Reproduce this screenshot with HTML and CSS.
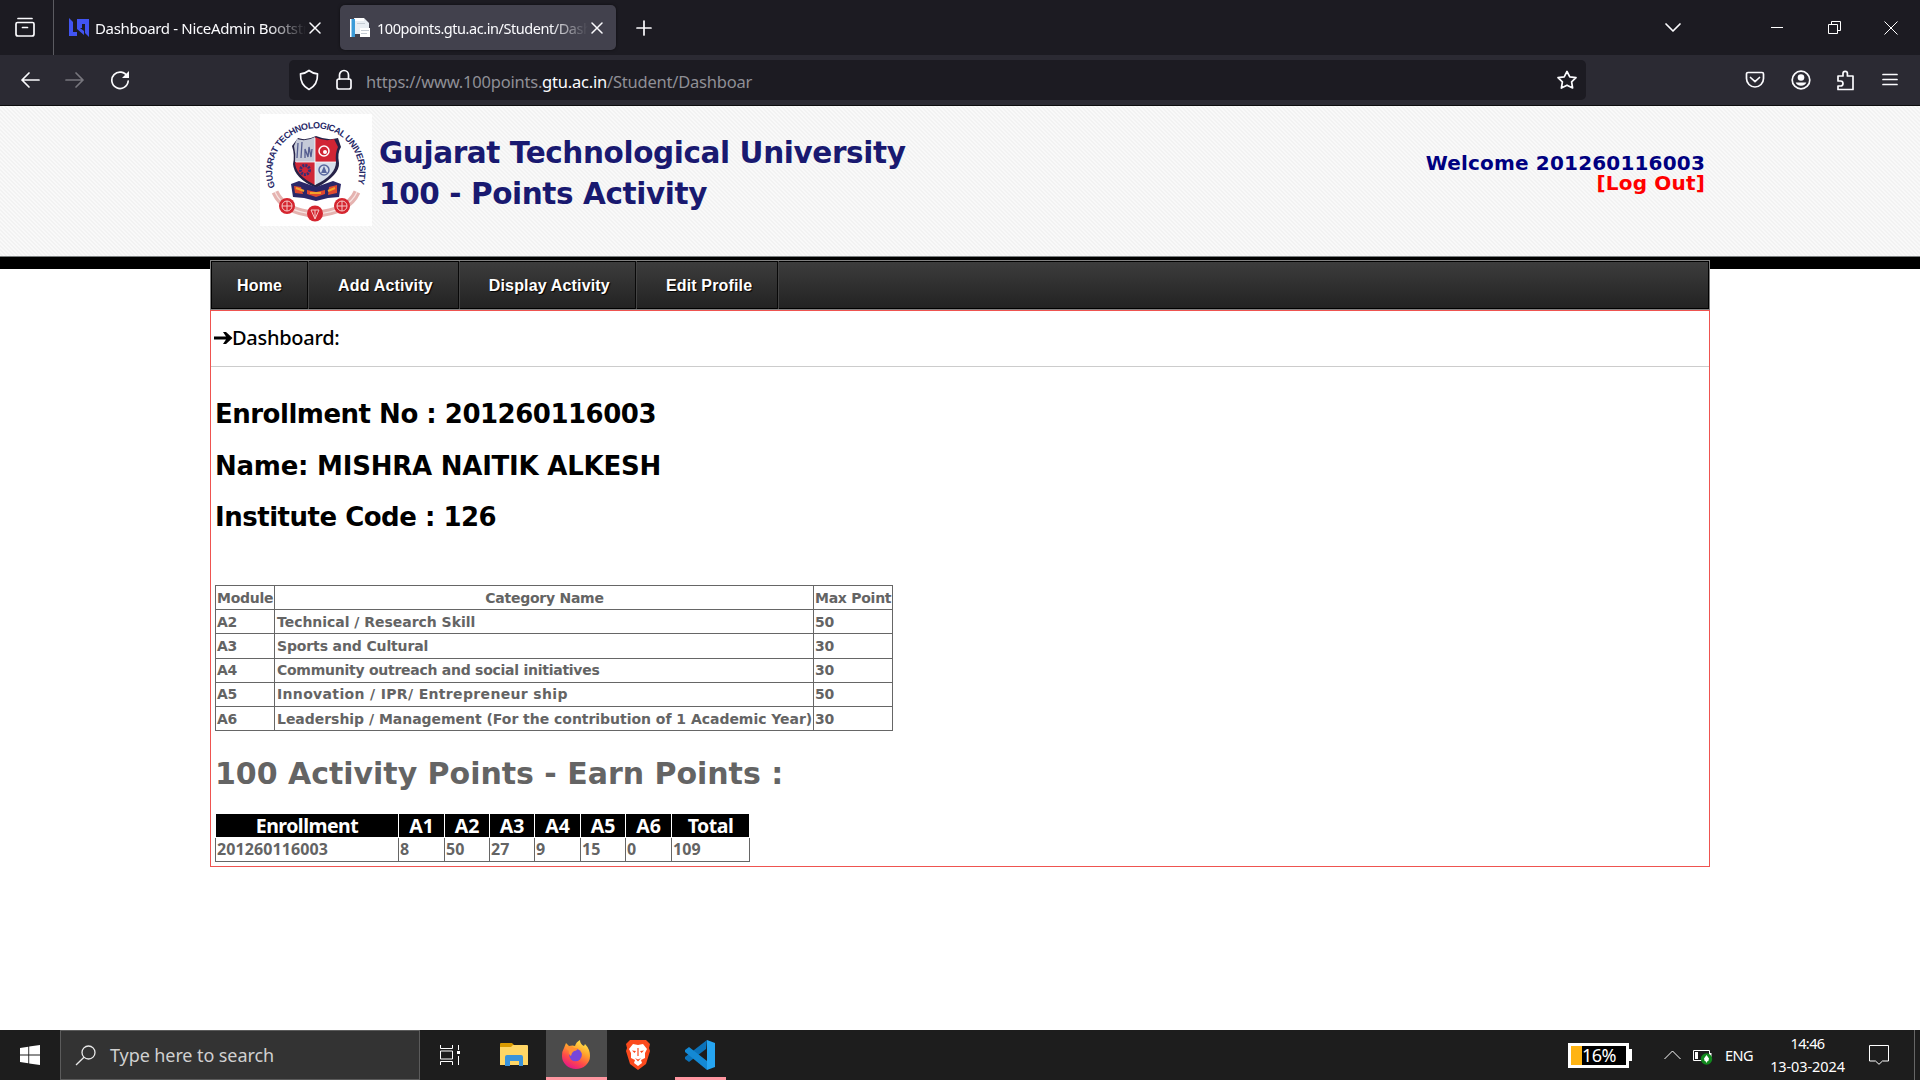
FILE: index.html
```html
<!DOCTYPE html>
<html lang="en">
<head>
<meta charset="utf-8">
<title>100 Points Activity - Dashboard</title>
<link rel="stylesheet" href="styles.css">
</head>
<body>
<div class="tabbar">
  <div class="recent"><svg width="22" height="22" viewBox="0 0 22 22" class="ln"><path d="M4 2.5h14M3.5 6.500h15a1.500 1.500 0 0 1 1.500 1.500v10a2 2 0 0 1-2 2H4a2 2 0 0 1-2-2V8a1.500 1.500 0 0 1 1.500-1.500zM8.500 11.500h5"/></svg></div>
  <div class="tab">
    <svg width="20" height="20" viewBox="0 0 20 20"><path fill="#4154f1" d="M0 0l4 4v10h4v4H0zM8 1h12v18l-4-4V6h-3v4h-2l4 3v4l-7-6z"/></svg>
    <span class="tab-title">Dashboard - NiceAdmin Bootstrap</span>
    <svg class="x ln" width="12" height="12" viewBox="0 0 12 12"><path d="M1 1l10 10M11 1L1 11"/></svg>
  </div>
  <div class="tab active">
    <svg width="20" height="20" viewBox="0 0 20 20"><path fill="#e9eef3" d="M4 0h10l5 5v11H4z"/><path fill="#3b9bd8" d="M1 1h4v18H1z"/><path fill="#fff" d="M0 1h1.500v18H0zM5 0h9v3H5zM10 10h10v9H10z"/><path fill="#c5ccd4" d="M11 12h8v1h-8zM11 15h6v1h-6zM7 5h8v1H7z"/></svg>
    <span class="tab-title tight">100points.gtu.ac.in/Student/Dashboard</span>
    <svg class="x ln" width="12" height="12" viewBox="0 0 12 12"><path d="M1 1l10 10M11 1L1 11"/></svg>
  </div>
  <svg class="plus ln" width="16" height="16" viewBox="0 0 16 16"><path d="M8 1v14M1 8h14"/></svg>
  <div class="wincontrols">
    <svg class="ln chev" width="18" height="12" viewBox="0 0 18 12"><path d="M2 2l7 7 7-7"/></svg>
    <svg class="thin min" width="12" height="14" viewBox="0 0 12 14"><path d="M0 6.500h12"/></svg>
    <svg class="thin res" width="13" height="13" viewBox="0 0 13 13"><path d="M.5 3.500h9v9h-9zM3.500 3.500v-3h9v9h-3"/></svg>
    <svg class="thin" width="14" height="14" viewBox="0 0 14 14"><path d="M.5.5l13 13M13.500.5l-13 13"/></svg>
  </div>
</div>
<div class="toolbar">
  <div class="navbtns">
    <svg class="ln" width="20" height="18" viewBox="0 0 20 18"><path d="M19 9H2M9 2L2 9l7 7"/></svg>
    <svg class="ln dim" width="20" height="18" viewBox="0 0 20 18"><path d="M1 9h17M11 2l7 7-7 7"/></svg>
    <svg class="ln" width="20" height="20" viewBox="0 0 20 20"><path d="M17.300 6.500A8.200 8.200 0 1 0 18.200 11"/><path fill="#fbfbfe" stroke="none" d="M19 1v7h-7z"/></svg>
  </div>
  <div class="urlbar">
    <svg class="ln" width="20" height="22" viewBox="0 0 20 22"><path d="M10 1.500C7 4 4 4.600 1.500 4.800 1.200 12 4 17.500 10 20.500 16 17.500 18.800 12 18.500 4.800 16 4.600 13 4 10 1.500z"/></svg>
    <svg class="ln lock" width="18" height="22" viewBox="0 0 18 22"><rect x="2" y="10" width="14" height="10" rx="2"/><path d="M4.500 10V6a4.500 4.500 0 0 1 9 0v4"/></svg>
    <span class="url">https://www.100points.<b>gtu.ac.in</b>/Student/Dashboar</span>
    <svg class="ln star" width="22" height="20" viewBox="0 0 22 20"><path d="M11 1.500l2.800 5.300 6.200.9-4.400 4.200 1 6.100-5.600-2.800L5.400 18l1-6.100L2 7.700l6.200-.9z"/></svg>
  </div>
  <div class="actions">
    <svg class="ln" width="20" height="18" viewBox="0 0 20 18"><path d="M3 1.500h14a1.500 1.500 0 0 1 1.500 1.500v4.500a8.500 8.500 0 0 1-17 0V3A1.500 1.500 0 0 1 3 1.500zM5.500 6.500L10 10.700l4.500-4.200"/></svg>
    <svg class="ln" width="20" height="20" viewBox="0 0 20 20"><circle cx="10" cy="10" r="8.800"/><circle cx="10" cy="7.500" r="3.300" fill="#fbfbfe" stroke="none"/><path fill="#fbfbfe" stroke="none" d="M4.700 12.500h10.600c-.5 2-2.500 3.200-5.300 3.200s-4.800-1.200-5.300-3.200z"/></svg>
    <svg class="ln" width="20" height="21" viewBox="0 0 20 21"><path d="M2 9V6h5V3.500a2.200 2.200 0 0 1 4.400 0V6H17v13.500H2V16h2.500a2 2 0 0 0 0-5H2z"/></svg>
    <svg class="ln" width="16" height="14" viewBox="0 0 16 14"><path d="M1 1.500h14M1 6.500h14M1 11.500h14"/></svg>
  </div>
</div>
<header class="masthead">
  <svg class="crest" width="112" height="112" viewBox="0 0 112 112">
    <rect width="112" height="112" fill="#fff"/>
    <path id="ring" fill="none" d="M15 75A43.500 43.500 0 1 1 96.500 75"/>
    <path d="M15 78Q24 98 55 100 88 98 97 78" fill="none" stroke="#e5b3b0" stroke-width="7"/>
    <path d="M15 78Q24 98 55 100 88 98 97 78" fill="none" stroke="#f7e4e2" stroke-width="1.200"/>
    <text class="crest-text" transform="translate(0 -2)"><textPath href="#ring" textLength="164">GUJARAT TECHNOLOGICAL UNIVERSITY</textPath></text>
    <path fill="#262247" d="M38 24q8 3 18-2 12 5 22 2l3 9q-4 6-2 16 1 12-23 25-22-10-23-24 2-9-1-18z"/>
    <path fill="#c5cad8" d="M37 25q9 3 18-2v25H35q1-8-1-16z"/><path fill="#d12534" d="M55 23q10 5 19 2l4 8q-3 6-2 15H55z"/>
    <path fill="#cf2738" d="M35 48h20v23q-20-10-20-23z"/><path fill="#d7dfeb" d="M55 48h21q0 13-21 23z"/>
    <path d="M37 44l1-15M41 44l1-16M45 44l0-9 3 8 1-10 2 10 1-8" fill="none" stroke="#555d90" stroke-width="1.300"/>
    <circle cx="64" cy="37" r="5" fill="none" stroke="#fff" stroke-width="1.500"/><circle cx="65" cy="38" r="2" fill="#fff"/>
    <circle cx="45" cy="56" r="4.500" fill="none" stroke="#352f75" stroke-width="3" stroke-dasharray="2 1"/>
    <circle cx="64" cy="56" r="5" fill="none" stroke="#58679e" stroke-width="1.500"/><path d="M64 52l3 7h-6z" fill="#58679e"/>
    <path d="M36 48h40M55 24v47" stroke="#fff" stroke-width=".8"/>
    <path fill="#2b2768" d="M31 70l8-3 17 6 17-6 8 3-2 13-11 1-12 3-12-3-11-1z"/>
    <path fill="#e0492f" d="M34 72l7 1 2 7-8-1zM69 73l8-2 0 8-9 2zM47 76l9 2 9-2v4l-9 3-9-3z"/>
    <path d="M36 74l8 3M50 79h11M68 77l7-3" fill="none" stroke="#f3a32b" stroke-width="2"/>
    <g fill="#d5252f"><circle cx="27" cy="92" r="8"/><circle cx="55" cy="99.500" r="8"/><circle cx="82" cy="92" r="8"/></g>
    <g fill="none" stroke="#f5c9c7" stroke-width="1"><circle cx="27" cy="92" r="5"/><path d="M22 92h10M27 87v10M77 92h10M82 87v10M51 96h8l-4 9zM55 96v8"/><circle cx="82" cy="92" r="5"/></g>
  </svg>
  <div class="title"><div>Gujarat Technological University</div><div>100 - Points Activity</div></div>
  <div class="welcome"><div>Welcome 201260116003</div><div class="logout">[Log Out]</div></div>
</header>
<div class="band"></div>
<div class="page">
  <nav class="menu"><a>Home</a><a>Add Activity</a><a>Display Activity</a><a>Edit Profile</a></nav>
  <main class="panel">
    <div class="crumb"><svg width="19" height="14" viewBox="0 0 19 14"><path d="M0 5.600h12L9 1h3l6.500 6-6.500 6H9l3-4.600H0z"/></svg><span>Dashboard:</span></div>
    <div class="content">
      <h2>Enrollment No : 201260116003</h2>
      <h2 class="name">Name: MISHRA NAITIK ALKESH</h2>
      <h2>Institute Code : 126</h2>
      <table class="modules">
        <colgroup><col class="c-module"><col><col class="c-max"></colgroup>
        <tr><th>Module</th><th>Category Name</th><th>Max Point</th></tr>
        <tr><td>A2</td><td class="even">Technical / Research Skill</td><td>50</td></tr>
        <tr><td>A3</td><td class="mid">Sports and Cultural</td><td>30</td></tr>
        <tr><td>A4</td><td>Community outreach and social initiatives</td><td>30</td></tr>
        <tr><td>A5</td><td class="loose">Innovation / IPR/ Entrepreneur ship</td><td>50</td></tr>
        <tr><td>A6</td><td class="even">Leadership / Management (For the contribution of 1 Academic Year)</td><td>30</td></tr>
      </table>
      <h1>100 Activity Points - Earn Points :</h1>
      <table class="points">
        <colgroup><col class="p-id"><col class="p-wide"><col><col><col class="p-wide"><col><col class="p-wide"><col class="p-total"></colgroup>
        <tr><th>Enrollment</th><th class="code">A1</th><th class="code">A2</th><th class="code">A3</th><th class="code">A4</th><th class="code">A5</th><th class="code">A6</th><th>Total</th></tr>
        <tr><td>201260116003</td><td>8</td><td>50</td><td>27</td><td>9</td><td>15</td><td>0</td><td>109</td></tr>
      </table>
    </div>
  </main>
</div>
<footer class="taskbar">
  <div class="start"><svg width="20" height="20" viewBox="0 0 20 20"><path fill="#fff" d="M0 2.900L8.300 1.700V9.500H0zM9.200 1.600L20 0v9.500H9.200zM0 10.400h8.300v7.900L0 17.100zM9.200 10.400H20V20L9.200 18.400z"/></svg></div>
  <div class="search"><svg class="mag" width="21" height="21" viewBox="0 0 21 21"><circle cx="13.500" cy="7.500" r="6.500"/><path d="M9 12.200L1 20"/></svg><span>Type here to search</span></div>
  <div class="app view"><svg class="thin" width="21" height="20" viewBox="0 0 21 20"><path d="M.5 0v3.500h12V0M.5 20v-3.500h12V20M.5 6h12v8H.5zM18.500 0v5M18.500 11v9"/><path d="M17 6h3v3h-3z" fill="#fff" stroke="none"/></svg></div>
  <div class="app files"><svg width="28" height="24" viewBox="0 0 28 24"><path fill="#d99a00" d="M0 1q0-1 1-1h11l2 2v4H0z"/><path fill="#ffd665" d="M13 2h14q1 0 1 1v19H0V4h11z"/><path fill="#3a93db" d="M5 14q0-2 2-2h14q2 0 2 2v9h-4v-5h-9v5H5z"/></svg></div>
  <div class="app current"><svg width="30" height="30" viewBox="0 0 30 30"><defs><linearGradient id="ff" x1=".8" y1="0" x2=".3" y2="1"><stop offset="0" stop-color="#fff14f"/><stop offset=".4" stop-color="#ffa02b"/><stop offset=".7" stop-color="#ff4a49"/><stop offset="1" stop-color="#e3148c"/></linearGradient></defs><path fill="url(#ff)" d="M3 8l2-5 3 3q4-1 6 0 1-4 5-6 0 4 4 6l1-2q5 5 5 12a14 13 0 0 1-28 0q0-5 2-8z"/><circle cx="14.500" cy="15" r="6.300" fill="#7746d9"/><path fill="#ff9034" d="M4 7l4-1q4 0 5 2l4 0q-1 3-4 3-3 2-3 5-3-2-2-5z"/></svg></div>
  <div class="app"><svg width="26" height="30" viewBox="0 0 26 30"><path fill="#fb4a1d" d="M5 0h16l4 4-1 4 1 3-4 13-8 6-8-6L1 11l1-3-1-4z"/><path fill="#fff" d="M8 4l5 1 5-1 4 5-2 4 0 5-4 2 1 3-4 3-4-3 1-3-4-2V13L4 9z"/><path fill="#fb4a1d" d="M7 10.500l4 .5-1.500 2zM19 10.500l-4 .5 1.500 2zM12.400 8h1.200v8h-1.200zM10 18l3 1.500 3-1.500-3 3.500z"/></svg></div>
  <div class="app open"><svg width="30" height="30" viewBox="0 0 30 30"><path fill="#0b72b9" d="M22 0l-1 9L4 22l-4-3v-2z"/><path fill="#1489d4" d="M4 7L0 10v2l22 18V21z"/><path fill="#26a5f1" d="M22 0l8 3v24l-8 3z"/></svg></div>
  <div class="tray">
    <div class="battery">16%</div><div class="nub"></div>
    <svg class="thin up" width="17" height="10" viewBox="0 0 17 10"><path d="M.5 9L8.500 1l8 8"/></svg>
    <svg class="pow" width="20" height="16" viewBox="0 0 20 16"><path fill="none" stroke="#fff" d="M.5 1.500h16v10H.5z"/><path fill="#fff" d="M2 3h3v7H2zM17 4h1.500v4H17z"/><circle cx="13.500" cy="10" r="5.700" fill="#128a1e"/><path fill="#fff" d="M13.500 6l2.500 3.500q0 2.500-2 3v1h-1v-1q-2-.5-2-3z"/></svg>
    <span class="lang">ENG</span>
    <div class="clock"><div class="time">14:46</div><div>13-03-2024</div></div>
    <svg class="thin note" width="20" height="20" viewBox="0 0 20 20"><path d="M.5.5h19v15.500h-6L10 19.300 6.500 16h-6z"/></svg>
  </div>
</footer>
</body>
</html>
```
FILE: styles.css
```css
* { box-sizing: border-box; }
body { margin: 0; width: 1920px; height: 1080px; overflow: hidden; display: flex; flex-direction: column; background: #fff; font-family: "DejaVu Sans", Verdana, sans-serif; }
svg { display: block; flex: none; }
.ln { fill: none; stroke: #fbfbfe; stroke-width: 1.7; stroke-linecap: round; stroke-linejoin: round; }
.thin { fill: none; stroke: #fff; stroke-width: 1; }
.dim { stroke: #77767d; }

/* browser tabs */
.tabbar { height: 55px; flex: none; display: flex; align-items: center; background: #1c1b22; color: #fbfbfe; font: 15px "Noto Sans", sans-serif; }
.recent { width: 54px; height: 55px; padding: 16px 0 0 14px; border-right: 1px solid #5b5b61; }
.tab { display: flex; align-items: center; width: 276px; height: 45px; padding-left: 15px; margin-right: 10px; border-radius: 5px; }
.tab.active { padding-left: 10px; background: #42414d; box-shadow: 0 0 3px #0008; }
.tab-title { width: 211px; margin-left: 6px; padding-top: 1px; overflow: hidden; white-space: nowrap; letter-spacing: -.33px; mask-image: linear-gradient(90deg, #000 82%, transparent); }
.tab-title.tight { font-size: 14.5px; letter-spacing: -.45px; margin-left: 7px; }
.x { margin-left: 3px; stroke-width: 1.5; }
.plus { margin-left: 10px; }
.wincontrols { margin-left: auto; display: flex; align-items: center; padding-right: 22px; }
.chev { margin-right: 89px; }
.min { margin-right: 45px; }
.res { margin-right: 43px; }

/* address bar */
.toolbar { height: 51px; flex: none; display: flex; align-items: center; background: #2b2a33; border-bottom: 1px solid #0c0c0d; }
.navbtns { width: 289px; display: flex; align-items: center; gap: 25px; padding-left: 20px; }
.urlbar { width: 1297px; height: 40px; border-radius: 5px; background: #1c1b22; display: flex; align-items: center; padding: 0 8px 0 10px; }
.lock { margin: 0 13px 0 16px; }
.url { font: 16.5px "Noto Sans", sans-serif; letter-spacing: -.21px; color: #8f8f96; white-space: nowrap; padding-top: 3px; }
.url b { font-weight: 400; color: #fbfbfe; }
.star { margin-left: auto; }
.actions { flex: 1; display: flex; align-items: center; justify-content: flex-end; gap: 25.7px; padding-right: 22px; }

/* university header */
.masthead { height: 151px; flex: none; display: flex; border-bottom: 1px solid #7c8081; background: repeating-linear-gradient(45deg, #f9f9f9 0 1.414px, #f2f2f2 1.414px 2.828px); font-weight: 700; }
.crest { margin: 8px 0 0 260px; }
.crest-text { font: 700 9px "Liberation Sans", sans-serif; fill: #262766; }
.title { padding: 27px 0 0 7px; font-size: 29.5px; line-height: 41px; letter-spacing: -.4px; color: #191970; white-space: nowrap; }
.welcome { margin-left: auto; padding: 47px 215px 0 0; text-align: right; font-size: 20px; line-height: 20px; letter-spacing: .18px; color: #000080; white-space: nowrap; }
.logout { color: #f00; }
.band { height: 12px; flex: none; background: #000; }

/* page column */
.page { width: 1500px; margin: -9px 0 0 210px; flex: none; position: relative; }
.menu { height: 50px; display: flex; border: 1px solid #808080; background: linear-gradient(#3d3d3d, #222); box-shadow: inset 0 0 0 1px #000; }
.menu a { display: flex; align-items: center; padding: 2px 25px 0 30px; border-right: 1px solid #080808; box-shadow: 1px 0 #444; color: #fff; font: 700 16px "Liberation Sans", Arial, sans-serif; letter-spacing: .16px; text-shadow: 1px 1px 1px #000; }
.menu a:first-child { padding: 2px 25px 0 26px; }
.panel { height: 557px; border: 1px solid #ef5350; color: #646464; }
.crumb { height: 56px; display: flex; align-items: center; padding: 0 0 2px 3px; border-bottom: 1px solid #ccc; color: #000; font: 500 20px "Noto Sans", sans-serif; letter-spacing: -.28px; }
.crumb span { margin-left: -1px; }
.content { padding: 22px 0 0 4px; }
h2 { margin: 0; font-size: 26px; line-height: 51.7px; letter-spacing: -.49px; color: #000; white-space: nowrap; }
h2.name { letter-spacing: -.23px; }
h1 { margin: 23px 0 19px; font-size: 30px; line-height: 40px; letter-spacing: -.02px; white-space: nowrap; }
table { border-collapse: collapse; table-layout: fixed; }
th, td { padding: 0 0 0 1px; text-align: left; white-space: nowrap; font-weight: 700; line-height: 22px; }
.modules { width: 678px; height: 146px; margin-top: 41px; font-size: 14px; letter-spacing: -.26px; }
.c-module { width: 59px; }
.c-max { width: 79px; }
.modules th, .modules td { border: 1px solid #666; }
.modules td:nth-child(2) { padding-left: 2px; }
.modules th:nth-child(2) { text-align: center; }
.mid { letter-spacing: -.13px; }
.even { letter-spacing: -.03px; }
.loose { letter-spacing: .34px; }
.points { width: 535px; height: 49px; font: 700 16px "Noto Sans", sans-serif; }
.points col { width: 45px; }
.points .p-id { width: 183px; }
.points .p-wide { width: 46px; }
.points .p-total { width: 78px; }
.points th { height: 24px; padding: 0; border: 1px solid #fff; background: #000; color: #fff; font-size: 19.5px; line-height: 21px; letter-spacing: -.5px; text-align: center; }
.points .code { letter-spacing: 0; }
.points td { height: 24px; padding-bottom: 1px; line-height: 21px; letter-spacing: .1px; border: 1px solid #666; border-top-color: #fff; }

/* taskbar */
.taskbar { height: 50px; margin-top: auto; flex: none; display: flex; align-items: stretch; background: #1d1d1d; color: #fff; font-family: "Noto Sans", sans-serif; }
.start { width: 60px; display: flex; align-items: center; justify-content: center; }
.search { width: 360px; display: flex; align-items: center; gap: 14px; padding-left: 14px; border: 1px solid #5b5b5b; background: #333; color: #d0d0d0; font-size: 18px; letter-spacing: -.09px; }
.mag { fill: none; stroke: #e8e8e8; stroke-width: 1.3; }
.app { width: 61px; display: flex; align-items: center; justify-content: center; border-bottom: 3px solid transparent; padding-top: 2px; }
.view { width: 62px; padding-right: 2px; }
.files { width: 64px; }
.current { background: #4b4b4b; border-color: #ff96a0; padding-right: 1px; }
.open { width: 51px; margin-left: 7px; border-color: #ff96a0; padding-right: 1px; }
.tray { width: 352px; margin-left: auto; display: flex; align-items: center; font-size: 14.5px; }
.battery { width: 61px; height: 25px; border: 3px solid #fff; background: linear-gradient(90deg, #ffb413 11px, #000 11px); font-size: 18px; line-height: 18px; padding-left: 11px; letter-spacing: -.5px; }
.nub { width: 3px; height: 12px; background: #fff; }
.up { margin-left: 32px; }
.pow { margin: 3px 0 0 12px; }
.lang { width: 28px; margin-left: 12px; letter-spacing: -.55px; }
.clock { width: 77px; margin-left: 16px; text-align: center; line-height: 23px; letter-spacing: -.1px; }
.time { letter-spacing: -.6px; }
.note { margin-left: 23px; }
.tray::after { content: ""; width: 1px; height: 50px; margin-left: 25px; background: #666; }
```
